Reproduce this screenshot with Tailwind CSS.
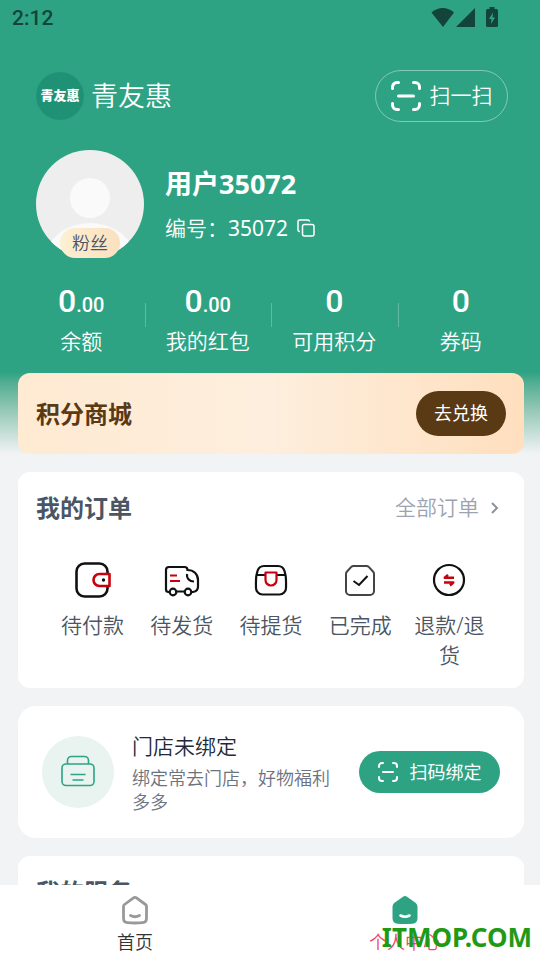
<!DOCTYPE html>
<html lang="zh-CN">
<head>
<meta charset="utf-8">
<meta name="viewport" content="width=device-width, initial-scale=1">
<title>个人中心</title>
<script src="https://cdn.jsdelivr.net/npm/@tailwindcss/browser@4"></script>
</head>
<body class="bg-[#f2f3f5] font-['Noto_Sans','Noto_Sans_CJK_SC',sans-serif] font-[350]">
<svg class="hidden" aria-hidden="true">
  <symbol id="scan" viewBox="0 0 30 30">
    <g fill="none" stroke="currentColor" stroke-width="3" stroke-linecap="round">
      <path d="M1.500 7.500V6A4.500 4.500 0 0 1 6 1.500h1.500M22.500 1.500H24A4.500 4.500 0 0 1 28.500 6v1.500M28.500 22.500V24a4.500 4.500 0 0 1-4.500 4.500h-1.500M7.500 28.500H6A4.500 4.500 0 0 1 1.500 24v-1.500M7.500 15h15"/>
    </g>
  </symbol>
</svg>
<div class="flex h-screen flex-col">
  <main class="min-h-0 flex-1 overflow-y-auto [scrollbar-width:none]">
    <div class="bg-linear-to-b from-[#2ea384] from-82% to-[#f2f3f5] text-white">
      <div class="flex h-9 items-center justify-between pr-[42px] pl-3 text-[#134439]">
        <span class="font-['Roboto',sans-serif] text-[21px] leading-9 font-medium">2:12</span>
        <div class="flex h-full items-start pt-[7px]">
          <svg class="h-5 w-6" viewBox="0 0 24 20" fill="currentColor"><path d="M0.500 5.500C7 -0.500 16.500 -0.500 23 5.500L12 20z"/></svg>
          <svg class="ml-px h-5 w-5" viewBox="0 0 20 20" fill="currentColor"><path d="M19 1v19H0z"/></svg>
          <svg class="ml-2.5 h-5 w-3" viewBox="0 0 12 20"><path fill="currentColor" d="M3.500 0h5v2h2A1.500 1.500 0 0 1 12 3.500v15a1.500 1.500 0 0 1-1.500 1.500h-9A1.500 1.500 0 0 1 0 18.500v-15A1.500 1.500 0 0 1 1.500 2h2z"/><path fill="#2ea384" d="M7 5.500 3 12h2.500L5 17l4-6.500H6.500z"/></svg>
        </div>
      </div>

      <header class="flex items-center justify-between pt-[34px] pr-8 pl-9">
        <div class="flex items-center gap-[7px]">
          <div class="flex size-12 items-center justify-center rounded-full bg-[#1f9275] text-[13px] font-black">青友惠</div>
          <h1 class="text-[27px] leading-9">青友惠</h1>
        </div>
        <button class="flex h-[52px] w-[133px] items-center justify-center gap-[9px] rounded-full border border-white/40 text-[21px]">
          <svg class="size-[30px]"><use href="#scan"/></svg>扫一扫
        </button>
      </header>

      <section class="flex items-center gap-[21px] px-9 pt-7">
        <div class="relative size-[108px] shrink-0">
          <svg class="size-full rounded-full" viewBox="0 0 108 108"><path fill="#eee" d="M0 0h108v108H0z"/><circle cx="54" cy="48" r="20" fill="#fafafa"/><ellipse cx="54" cy="108" rx="44" ry="35" fill="#fafafa"/></svg>
          <span class="absolute inset-x-6 bottom-0 h-[30px] rounded-full bg-linear-to-r from-[#fdf0d2] to-[#fae0bf] text-center text-[18px] leading-[30px] text-[#4b5563]">粉丝</span>
        </div>
        <div>
          <h2 class="text-[27px] leading-10 font-bold">用户35072</h2>
          <p class="mt-2 flex items-center gap-[9px] text-[21px] leading-8"><span>编号：<span class="font-normal">35072</span></span>
            <button aria-label="复制编号"><svg class="size-[18px]" viewBox="0 0 18 18" fill="none" stroke="currentColor" stroke-width="1.500"><rect x="5.500" y="5.500" width="11.500" height="11.500" rx="2"/><path d="M3 12.500H2.500A1.500 1.500 0 0 1 1 11V2.500A1.500 1.500 0 0 1 2.500 1H11a1.500 1.500 0 0 1 1.500 1.500"/></svg></button>
          </p>
        </div>
      </section>

      <section class="grid grid-cols-4 pt-[25px] pr-4 pl-[18px] text-center">
        <a href="#" class="relative block"><span class="block h-9 font-['Roboto',sans-serif] text-[32px] leading-9 font-medium">0<span class="text-[20px]">.00</span></span><span class="mt-1 block text-[21px] leading-9">余额</span><i class="absolute top-5 -right-px h-6 w-px bg-white/25"></i></a>
        <a href="#" class="relative block"><span class="block h-9 font-['Roboto',sans-serif] text-[32px] leading-9 font-medium">0<span class="text-[20px]">.00</span></span><span class="mt-1 block text-[21px] leading-9">我的红包</span><i class="absolute top-5 -right-px h-6 w-px bg-white/25"></i></a>
        <a href="#" class="relative block"><span class="block h-9 font-['Roboto',sans-serif] text-[32px] leading-9 font-medium">0</span><span class="mt-1 block text-[21px] leading-9">可用积分</span><i class="absolute top-5 -right-px h-6 w-px bg-white/25"></i></a>
        <a href="#" class="block"><span class="block h-9 font-['Roboto',sans-serif] text-[32px] leading-9 font-medium">0</span><span class="mt-1 block text-[21px] leading-9">券码</span></a>
      </section>

      <div class="pt-[14px] pr-4 pl-[18px]">
        <section class="flex items-center justify-between rounded-xl bg-linear-to-r from-[#ffead2] via-[#fdeedd] to-[#ffdfbe] p-[18px]">
          <h2 class="text-[24px] leading-9 font-bold text-[#5a3a14]">积分商城</h2>
          <button class="h-[45px] w-[90px] rounded-full bg-[#5a3a14] text-[18px] font-normal text-white">去兑换</button>
        </section>
      </div>
    </div>

    <div class="flex flex-col gap-[18px] pt-[18px] pr-4 pb-[18px] pl-[18px]">
      <section class="h-[216px] rounded-xl bg-white p-[18px]">
        <div class="flex h-9 items-center justify-between">
          <h2 class="text-[24px] leading-9 font-bold text-[#4b5563]">我的订单</h2>
          <a href="#" class="flex items-center gap-[10px] pr-[5px] text-[21px] text-[#9ca3af]">全部订单
            <svg class="h-3 w-3" viewBox="0 0 12 12" fill="none" stroke="#8b929c" stroke-width="2"><path d="m3 1 5 5-5 5"/></svg></a>
        </div>
        <nav class="mt-9 grid grid-cols-5 px-3 text-center text-[21px] leading-[30px] text-[#4b5563]">
          <a href="#" class="flex flex-col items-center gap-3">
            <svg class="size-9" viewBox="0 0 36 36" fill="none" stroke-width="2.600"><path stroke="#111" d="M32.500 11V9.500a8 8 0 0 0-8-8h-15a8 8 0 0 0-8 8v17a8 8 0 0 0 8 8h15a8 8 0 0 0 8-8V25"/><path stroke="#c7000b" stroke-linejoin="round" d="M34.500 12v12h-10a6 6 0 0 1 0-12z"/><circle cx="28.500" cy="18" r="1.700" fill="#111"/></svg>
            <span>待付款</span></a>
          <a href="#" class="flex flex-col items-center gap-3">
            <svg class="size-9" viewBox="0 0 36 36" fill="none" stroke="#111" stroke-width="2.200"><path d="M5.500 30H4.500A2.500 2.500 0 0 1 2 27.500V8a3 3 0 0 1 3-3h15.500a3 3 0 0 1 3 3c6 0 10.500 4 10.500 10v6.500c0 3-2 5-5 5.500h-1.500M12.500 29.500h8M23 12c-.5 4 2 7.500 7 7.500"/><circle cx="9" cy="30" r="3.300"/><circle cx="24" cy="30" r="3.300"/><path stroke="#c7000b" d="M6 13.500h7M6 19h10"/></svg>
            <span>待发货</span></a>
          <a href="#" class="flex flex-col items-center gap-3">
            <svg class="size-9" viewBox="0 0 36 36" fill="none" stroke-width="2.200"><path stroke="#111" d="M3.500 13 4.500 9A7 7 0 0 1 11 4h14a7 7 0 0 1 6.500 5l1 4c.7 3 .6 6 .5 13a6.500 6.500 0 0 1-6.500 6.500h-17A6.500 6.500 0 0 1 3 26c-.1-7-.2-10 .5-13zM3.500 13H12m12 0h8.500"/><path stroke="#c7000b" stroke-linejoin="round" d="M12.500 10.500h11V18a5.500 5.500 0 0 1-11 0z"/></svg>
            <span>待提货</span></a>
          <a href="#" class="flex flex-col items-center gap-3">
            <svg class="size-9" viewBox="0 0 36 36" fill="none" stroke-width="2"><path stroke="#444" d="M11.500 4h13a3 3 0 0 1 2.200.9l4.500 4.800A3 3 0 0 1 32 12v17a4 4 0 0 1-4 4H8a4 4 0 0 1-4-4V12a3 3 0 0 1 .8-2.300l4.500-4.800a3 3 0 0 1 2.200-.9z"/><path stroke="#111" d="m11.500 19 5.500 4 8.500-9"/></svg>
            <span>已完成</span></a>
          <a href="#" class="flex flex-col items-center gap-3">
            <svg class="size-9" viewBox="0 0 36 36" fill="none" stroke-width="2.200"><circle cx="18" cy="18" r="15" stroke="#111"/><path stroke="#c7000b" stroke-width="2.400" stroke-linejoin="round" d="M23 15.700h-9.300L17 12.800M13 20.500h9.300L19 23.500"/></svg>
            <span>退款/退货</span></a>
        </nav>
      </section>

      <section class="flex h-[132px] items-center rounded-[18px] bg-white px-6">
        <div class="flex size-[72px] shrink-0 items-center justify-center rounded-full bg-[#e9f4f1]">
          <svg class="size-9" viewBox="0 0 36 36" fill="none" stroke="#2ea384" stroke-width="1.600"><rect x="2" y="10" width="32" height="21.500" rx="4"/><path d="M7.500 10V6.500a4 4 0 0 1 4-4h13a4 4 0 0 1 4 4V10M10.500 20.500h15M12.500 26h11"/></svg>
        </div>
        <div class="ml-[18px] min-w-0 flex-1">
          <h3 class="text-[21px] leading-8 text-[#1f2937]">门店未绑定</h3>
          <p class="mt-1 max-w-[210px] text-[18px] leading-6 text-[#6b7280]">绑定常去门店，好物福利多多</p>
        </div>
        <button class="flex h-[42px] w-[141px] shrink-0 items-center justify-center gap-3 rounded-full bg-[#2ea384] text-[18px] font-normal text-white">
          <svg class="size-5"><use href="#scan"/></svg>扫码绑定
        </button>
      </section>

      <section class="rounded-xl bg-white p-[18px]">
        <h2 class="text-[24px] leading-9 font-bold text-[#4b5563]">我的服务</h2>
      </section>
    </div>
  </main>

  <nav class="relative grid h-[75px] shrink-0 grid-cols-2 bg-white text-[18px]">
    <a href="#" class="flex flex-col items-center gap-[3px] pt-2.5 text-[#333]">
      <svg class="size-[30px]" viewBox="0 0 30 30" fill="none" stroke="#999" stroke-width="2.800"><path stroke-linejoin="round" d="M13.500 2.900a2.500 2.500 0 0 1 3 0l9 6.600a2.500 2.500 0 0 1 1 2V23c0 3-1 4.500-4 4.700-5 .4-10 .4-15 0-3-.2-4-1.700-4-4.700V11.500a2.500 2.500 0 0 1 1-2z"/><path stroke-linecap="round" d="M10.500 20.500c3 1.700 6 1.700 9 0"/></svg>
      <span class="leading-7">首页</span></a>
    <a href="#" class="flex flex-col items-center gap-[3px] pt-2.5 text-[#f0436f]" aria-current="page">
      <svg class="size-[30px]" viewBox="0 0 30 30" fill="none"><path fill="#2ea384" d="M13 1.800a3.500 3.500 0 0 1 4 0l8.500 6a5 5 0 0 1 2 3.800V23c0 3.500-1.500 5.500-5 5.800-5 .3-10 .3-15 0-3.500-.3-5-2.300-5-5.800V11.600a5 5 0 0 1 2-3.800z"/><path stroke="#fff" stroke-width="2.600" stroke-linecap="round" d="M10.500 20.500c3 1.700 6 1.700 9 0"/></svg>
      <span class="leading-7">个人中心</span></a>
    <span class="pointer-events-none absolute right-2 bottom-[5px] text-[26px] leading-9 font-bold text-[#1f9a14]">ITMOP.COM</span>
  </nav>
</div>
</body>
</html>
